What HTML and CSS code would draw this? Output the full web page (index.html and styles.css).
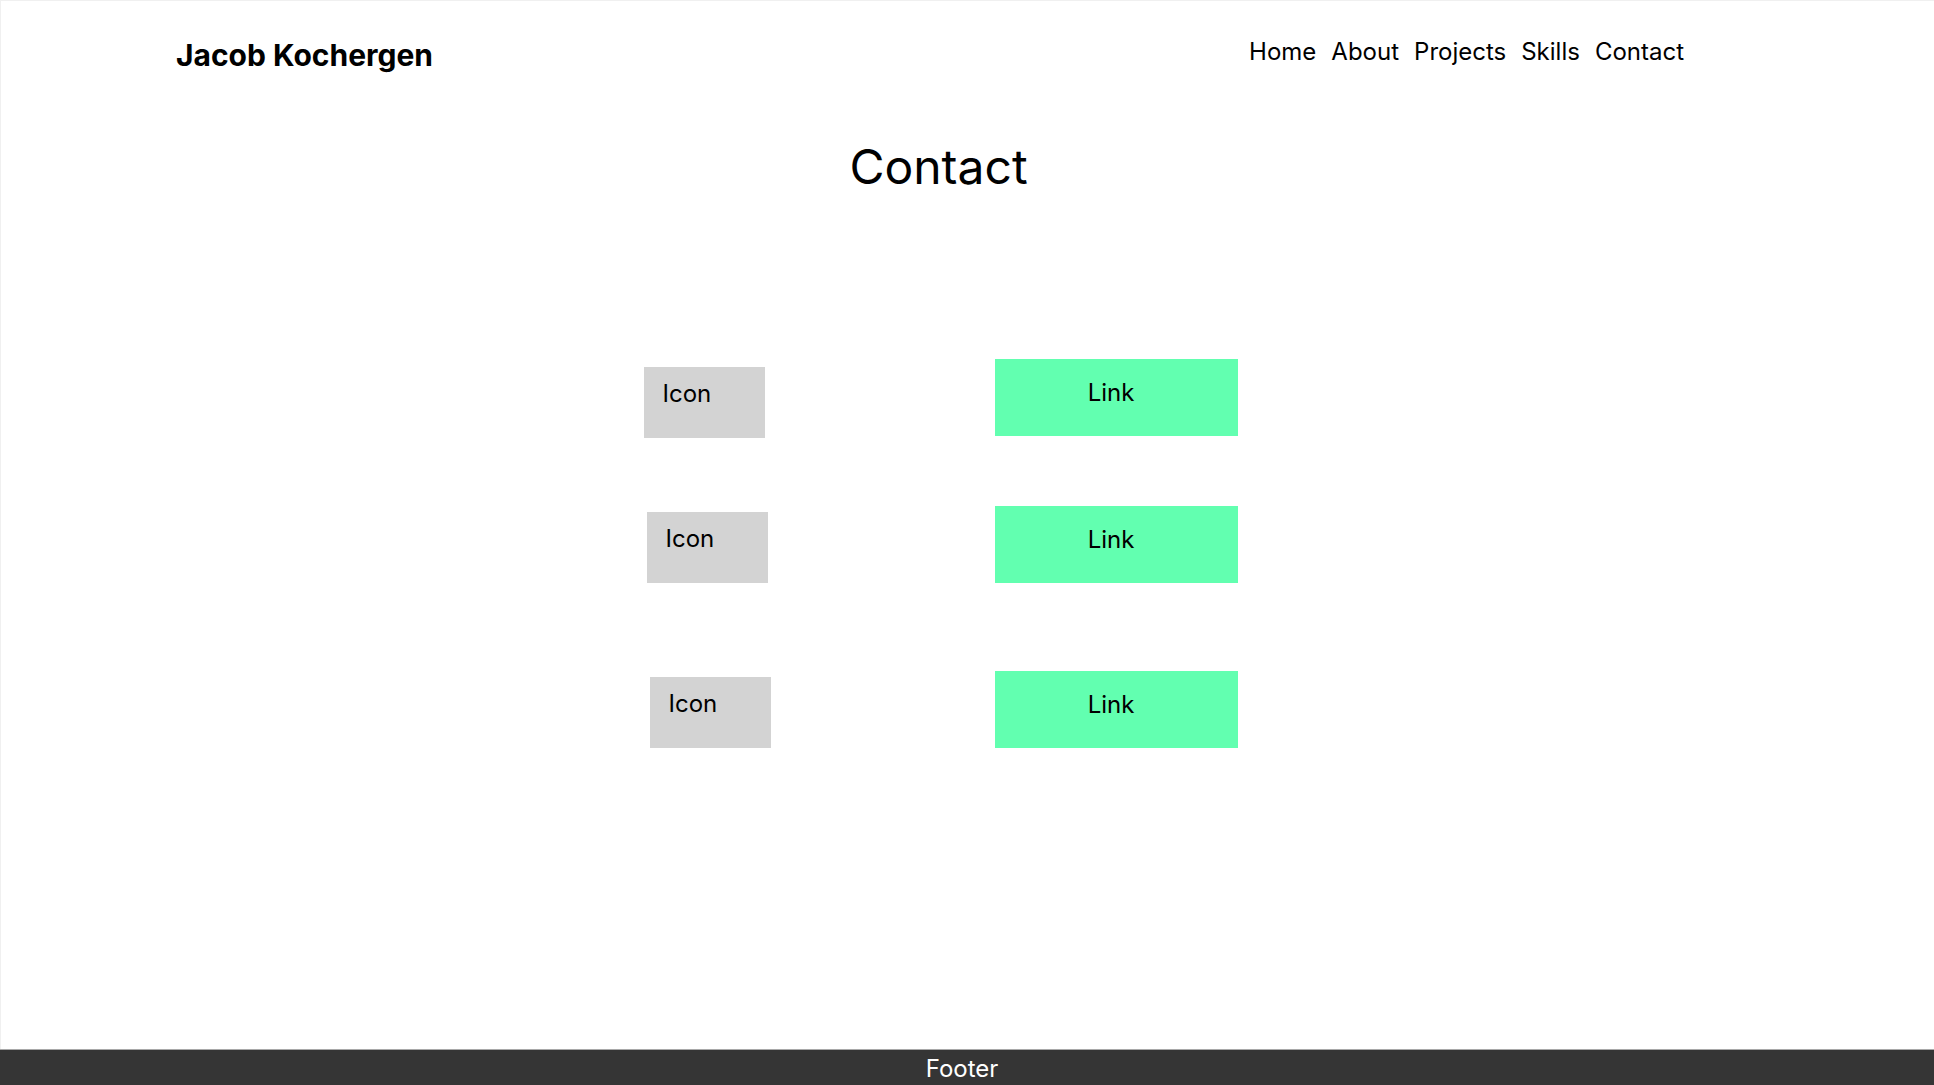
FILE: index.html
```html
<!DOCTYPE html>
<html lang="en">
<head>
<meta charset="utf-8">
<title>Jacob Kochergen - Contact</title>
<link rel="stylesheet" href="styles.css">
</head>
<body>
<div class="page">
  <div class="wrap">
    <header class="site-header">
      <div class="logo">Jacob Kochergen</div>
      <nav class="nav">
        <a href="#">Home</a>
        <a href="#">About</a>
        <a href="#">Projects</a>
        <a href="#">Skills</a>
        <a href="#">Contact</a>
      </nav>
    </header>
    <main class="content">
      <h1 class="title">Contact</h1>
      <div class="contact-list">
        <div class="row row-1">
          <div class="icon">Icon</div>
          <a class="link" href="#">Link</a>
        </div>
        <div class="row row-2">
          <div class="icon">Icon</div>
          <a class="link" href="#">Link</a>
        </div>
        <div class="row row-3">
          <div class="icon">Icon</div>
          <a class="link" href="#">Link</a>
        </div>
      </div>
    </main>
  </div>
</div>
<footer class="footer">Footer</footer>
</body>
</html>
```

FILE: styles.css
```css
html, body {
  margin: 0;
  padding: 0;
}
body {
  font-family: "Inter", "Noto Sans", sans-serif;
  color: #000;
  background: #fff;
  min-height: 100vh;
  display: flex;
  flex-direction: column;
}
.page {
  flex: 1;
  border-left: 1px solid #f0f0f0;
  border-top: 1px solid #f0f0f0;
}
.wrap {
  margin-left: 175px;
  width: 1525px;
}
.site-header {
  display: flex;
  justify-content: space-between;
  align-items: flex-start;
  padding-top: 36px;
}
.logo {
  font-size: 30px;
  font-weight: 700;
  line-height: 36px;
}
.nav {
  display: flex;
  gap: 15px;
  margin-right: 17px;
}
.nav a {
  font-size: 24px;
  line-height: 29px;
  color: #000;
  text-decoration: none;
}
.content {
  display: flex;
  flex-direction: column;
}
.title {
  margin: 65px 0 0;
  font-size: 48px;
  font-weight: 400;
  line-height: 58px;
  text-align: center;
}
.contact-list {
  margin-top: 163px;
  width: 594px;
  align-self: center;
  margin-left: 4px;
}
.row {
  display: flex;
  align-items: flex-start;
}
.row-2 { margin-top: 68px; }
.row-3 { margin-top: 88px; }
.icon {
  width: 121px;
  height: 71px;
  box-sizing: border-box;
  background: #d3d3d3;
  font-size: 24px;
  line-height: 29px;
  padding: 12px 0 0 19px;
  margin-top: 8px;
}
.row-2 .icon { margin-top: 6px; margin-left: 3px; }
.row-3 .icon { margin-top: 6px; margin-left: 6px; }
.link {
  margin-left: auto;
  width: 243px;
  height: 77px;
  box-sizing: border-box;
  background: #62ffb0;
  color: #000;
  text-decoration: none;
  font-size: 24px;
  line-height: 29px;
  text-align: center;
  padding: 19px 10px 0 0;
}
.footer {
  background: #353535;
  border-top: 1px solid #a8a8a8;
  color: #fff;
  text-align: center;
  font-size: 24px;
  line-height: 29px;
  padding: 4px 10px 2px 0;
}
```
